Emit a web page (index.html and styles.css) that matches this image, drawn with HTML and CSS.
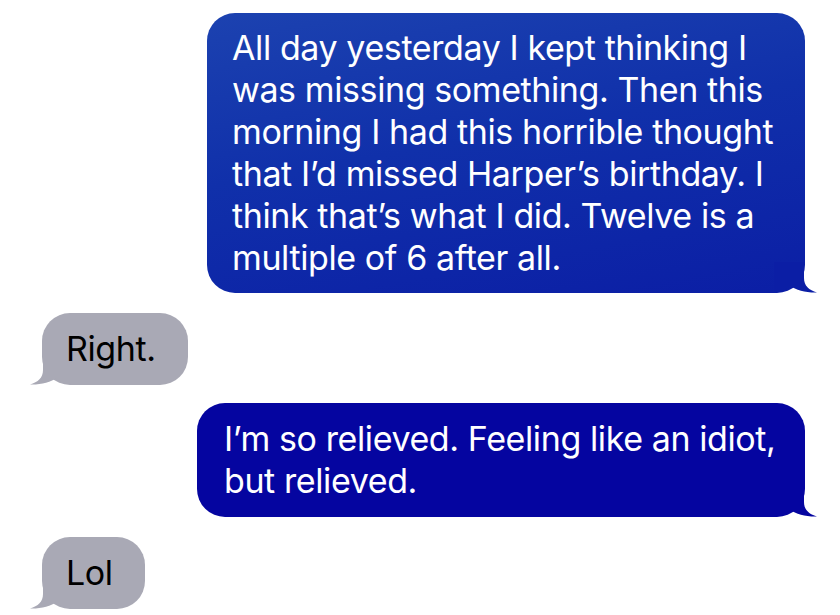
FILE: index.html
```html
<!DOCTYPE html>
<html>
<head>
<meta charset="utf-8">
<link rel="stylesheet" href="styles.css">
</head>
<body>
<div class="thread">
  <div class="row sent">
    <div class="bubble blue grad b1"><span class="txt">All day yesterday I kept thinking I<br>was missing something. Then this<br>morning I had this horrible thought<br>that I’d missed Harper’s birthday. I<br>think that’s what I did. Twelve is a<br>multiple of 6 after all.</span><svg class="tail tail-r" viewBox="0 0 44 31" width="44" height="31"><path class="tail-dark" d="M0,0 H30 V16 C30,24 35,28 43,30.5 C33,31 22,28 16,24 C13,27 9,30 2,30 H0 Z"/></svg></div>
  </div>
  <div class="row recv">
    <div class="bubble gray"><span class="txt">Right.</span><svg class="tail tail-l" viewBox="0 0 44 31" width="44" height="31"><path class="tail-gray" d="M0,0 H30 V16 C30,24 35,28 43,30.5 C33,31 22,28 16,24 C13,27 9,30 2,30 H0 Z"/></svg></div>
  </div>
  <div class="row sent tight">
    <div class="bubble blue b3"><span class="txt">I’m so relieved. Feeling like an idiot,<br>but relieved.</span><svg class="tail tail-r" viewBox="0 0 44 31" width="44" height="31"><path class="tail-blue" d="M0,0 H30 V16 C30,24 35,28 43,30.5 C33,31 22,28 16,24 C13,27 9,30 2,30 H0 Z"/></svg></div>
  </div>
  <div class="row recv">
    <div class="bubble gray"><span class="txt">Lol</span><svg class="tail tail-l" viewBox="0 0 44 31" width="44" height="31"><path class="tail-gray" d="M0,0 H30 V16 C30,24 35,28 43,30.5 C33,31 22,28 16,24 C13,27 9,30 2,30 H0 Z"/></svg></div>
  </div>
</div>
</body>
</html>
```

FILE: styles.css
```css
html, body {
  margin: 0;
  padding: 0;
  background: #ffffff;
}

.thread {
  display: flex;
  flex-direction: column;
  gap: 20px;
  padding: 13px 35px 0 42px;
  font-family: Inter, "Noto Sans", sans-serif;
  font-size: 34px;
  line-height: 42px;
  letter-spacing: -0.4px;
}

.row {
  display: flex;
}

.row.tight {
  margin-top: -2px;
}

.row.sent {
  justify-content: flex-end;
}

.row.recv {
  justify-content: flex-start;
}

.bubble {
  position: relative;
  border-radius: 28px;
  padding: 14px 24px 14px 25px;
  box-sizing: border-box;
  white-space: nowrap;
}

.txt {
  position: relative;
  z-index: 1;
}

.blue {
  color: #ffffff;
  background: #0505a0;
}

.grad {
  background: linear-gradient(170deg, #1c42b0 0%, #1030aa 45%, #0b1ea5 100%);
}

.b1 {
  width: 598px;
}

.b3 {
  width: 608px;
  padding: 15px 20px 15px 27px;
}

.gray {
  color: #000000;
  background: #a9a9b5;
  padding: 15px 32px 15px 24px;
}

.tail {
  position: absolute;
  bottom: 0;
  display: block;
  z-index: 0;
}

.tail-r {
  right: -13px;
}

.tail-l {
  left: -13px;
  transform: scaleX(-1);
}

.tail-dark {
  fill: #0b1ea5;
}

.tail-blue {
  fill: #0505a0;
}

.tail-gray {
  fill: #a9a9b5;
}
```
